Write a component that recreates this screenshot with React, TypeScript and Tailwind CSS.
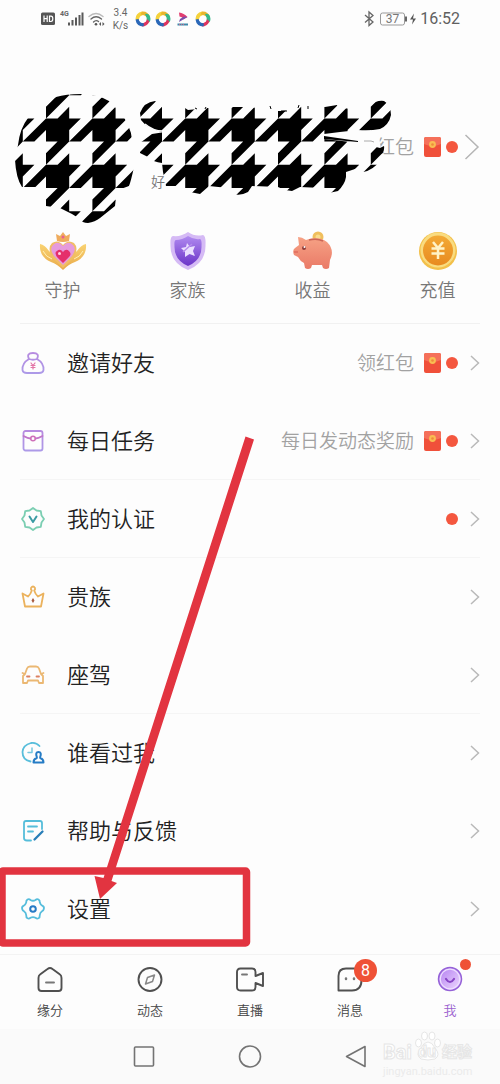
import React from 'react';

const CELL = 23.2;

function houndstoothPath() {
  const parts: string[] = [];
  for (let row = -1; row < 3; row++) {
    for (let col = -1; col < 8; col++) {
      const x = 46 + col * CELL * 2;
      const y = 118.4 + row * CELL * 2;
      const h = CELL / 2;
      const p = (a: number, b: number) => `${(x + a * h).toFixed(2)} ${(y + b * h).toFixed(2)}`;
      parts.push(
        `M${p(0, 0)}L${p(0, -1)}L${p(1, -2)}L${p(2, -2)}L${p(0, 0)}Z`,
        `M${p(0, 0)}L${p(1, 0)}L${p(2, -1)}L${p(2, 0)}L${p(3, 0)}L${p(2, 1)}L${p(2, 2)}L${p(0, 2)}Z`,
        `M${p(2, 2)}L${p(4, 0)}L${p(4, 1)}L${p(3, 2)}Z`,
      );
    }
  }
  return parts.join('');
}

function HoundstoothScribble() {
  return (
    <svg className="pointer-events-none absolute left-0 top-0 h-[200px] w-[400px]" viewBox="0 38 400 200" aria-hidden="true">
      <defs>
        <clipPath id="scribble">
          <path d="M56 97Q66 94 81 94Q100 95 109 101L119 111Q131 125 132 140L134 167Q131 181 129 186L118 190L115 206L100 218Q95 222 88 223Q82 223 80 219L72 214L60 208L46 206L46 187H22Q16 178 15 160L18 145Q20 128 28 118L46 106Q50 100 56 97Z" />
          <path d="M140 113Q144 102 155 101L163 106V109L185 108L188 110L208 108L230 109L233 107L252 107L268 111L281 111L295 110L300 105L310 108L325 107L337 105L338 107L368 112L370 106Q376 100 384 101Q391 105 391 115Q389 125 380 129Q370 131 358 130L340 132L324 134V139L360 143L380 148L384 146Q385 150 380 160Q374 170 363 172L358 168L346 172V177Q345 184 338 191L329 193L322 188L300 187L292 191L285 190L278 187L252 186L248 192Q241 196 233 194L228 188L209 186L200 194L190 192L180 186L166 186L163 172L162 163Q153 162 150 158L140 153V143L152 134L165 132Q148 130 141 120Z" />
        </clipPath>
      </defs>
      <path d="M322 136L352 128L378 128L381 150L378 160L352 160L346 142Z" fill="#fdfdfd" />
      <path d={houndstoothPath()} clipPath="url(#scribble)" />
      <path d="M145 124Q153 131 163 131" fill="none" stroke="#fdfdfd" strokeWidth="1.500" />
      <path d="M195 108L197 109M205 109L206 107M270 106L271 109M281 111H287M298 108L299 105M308 109V106" fill="none" stroke="#000" strokeWidth="1" />
      <path d="M324 136L358 141V142L324 139Z" />
      <path d="M364 141H371L374 142" fill="none" stroke="#aaa" />
    </svg>
  );
}

function Envelope() {
  return (
    <svg className="h-5 w-[17px] shrink-0" viewBox="0 0 17 20" aria-hidden="true">
      <rect width="17" height="20" rx="2" fill="#f0503a" />
      <path d="M0 2Q0 0 2 0H15Q17 0 17 2V7Q8.500 11 0 7Z" fill="#f5705a" />
      <circle cx="8.500" cy="7.500" r="3.400" fill="#f9bd52" />
      <circle cx="8.500" cy="7.500" r="1.300" fill="#ef8a3c" />
    </svg>
  );
}

function Dot() {
  return <span className="size-3 shrink-0 rounded-full bg-[#f4573f]" />;
}

function Chevron() {
  return (
    <svg className="h-[18px] w-[10px] shrink-0" viewBox="0 0 10 18" fill="none" stroke="#b9b9b9" strokeWidth="1.500" aria-hidden="true">
      <path d="M1 2L8.500 9L1 16" />
    </svg>
  );
}

function StatusIcons() {
  return (
    <svg className="h-[18px] w-[64px]" viewBox="0 0 64 18" aria-hidden="true">
      <rect x="0" y="2.500" width="14" height="12.500" rx="1.500" fill="#555" />
      <path d="M3 5.500V12M3 8.700H6.200M6.200 5.500V12M8.500 6.100V11.500H10Q11.800 11.500 11.800 8.800T10 6.100Z" stroke="#fff" strokeWidth="1.200" fill="none" />
      <g stroke="#5a5a5a" strokeWidth="2">
        <path d="M28 15.500V12.500M31.500 15.500V10M35 15.500V7.500M38.500 15.500V5M41.500 15.500V2.500" />
      </g>
      <g fill="none" stroke="#666" strokeWidth="1.400" strokeLinecap="round">
        <path d="M48 6.500Q55 0.500 62 6.500" stroke="#bbb" />
        <path d="M50 9Q55 4.500 60.500 9M52.500 12Q55 9.500 57.500 11.500" />
      </g>
      <circle cx="55" cy="14.300" r="1.300" fill="#555" />
      <path d="M58 14L60 12V16ZM63.500 14L61.500 12V16Z" fill="#555" />
    </svg>
  );
}

function Swirl() {
  return (
    <svg className="size-4" viewBox="0 0 16 16" aria-hidden="true">
      <path d="M0.500 8Q0.500 2 7 0.500L9 4Q5 4 3.500 10Q1 10 0.500 8Z" fill="#f5d23c" />
      <path d="M7 0.500Q13 0 15 6L12.500 8Q11 4 5.500 3.500Z" fill="#e8b62e" />
      <path d="M10 3Q15 2 15.500 8Q15.500 10 14 11.500L10.500 9.500Q12.500 7 10 3Z" fill="#34b98a" />
      <path d="M14.500 10.500Q12 15.500 7 15.500L5.500 12Q10 13 12 8Z" fill="#dd3560" />
      <path d="M8.500 15.500Q1.500 15.500 0.500 8.500L3.500 8Q4.500 12 9 12.500Z" fill="#2b68b8" />
      <circle cx="8" cy="8" r="3.600" fill="#fff" />
    </svg>
  );
}

function StatusBar() {
  return (
    <div className="flex h-[38px] items-center justify-between pl-[41px] pr-10 text-[#666]">
      <div className="flex items-center">
        <div className="relative">
          <StatusIcons />
          <span className="absolute left-[19px] top-0 text-[7px] leading-[8px] font-bold">4G</span>
        </div>
        <div className="ml-[7px] w-[17px] text-center text-[10px] leading-[13px]">
          <div>3.4</div>
          <div>K/s</div>
        </div>
        <div className="ml-[6px] flex items-center gap-1">
          <Swirl />
          <Swirl />
          <svg className="size-4" viewBox="0 0 16 16" aria-hidden="true">
            <path d="M4 1.500Q9 2 12.500 6L8 8.500Q8 6 4.500 5.500Z" fill="#e23d70" />
            <path d="M12.500 6L4 11L5 8L9 5.500Z" fill="#7650ad" />
            <path d="M2.500 13.500H13" stroke="#3f89aa" strokeWidth="2" />
            <path d="M4 13.500H9" stroke="#d06a8c" strokeWidth="1" strokeDasharray="1 1" />
          </svg>
          <Swirl />
        </div>
      </div>
      <div className="flex items-center">
        <svg className="h-[18px] w-[54px]" viewBox="0 0 54 18" fill="none" stroke="#666" aria-hidden="true">
          <path d="M1 5L9 12L5 15.500V2L9 5.500L1 12.500" strokeWidth="1.300" />
          <rect x="16.500" y="3" width="24" height="12" rx="2" stroke="#999" />
          <path d="M42 6.500V11.500" strokeWidth="2" />
          <path d="M50 3.500L46 9.500H49L48 14.500L52 8.500H49Z" fill="#555" stroke="none" />
          <text x="28.500" y="13" textAnchor="middle" fontSize="12" fill="#777" stroke="none">37</text>
        </svg>
        <span className="ml-[2px] text-base leading-5 text-[#606060]">16:52</span>
      </div>
    </div>
  );
}

const shortcuts = [
  {
    label: '守护',
    icon: (
      <>
        <path d="M1 13Q6 14 10 20L24 32L38 20Q42 14 47 13Q48 26 36 31Q30 33 24 39Q18 33 12 31Q0 26 1 13Z" fill="url(#gold)" />
        <path d="M4 20Q7 26 13 28M44 20Q41 26 35 28" stroke="#fff0b5" fill="none" />
        <path d="M24 37L13 26Q8 17 13 12Q19 8 24 14Q29 8 35 12Q40 17 35 26Z" fill="#f1bd65" />
        <path d="M24 34L15 25Q10 18 14 14Q19 9 24 15Q29 9 34 14Q38 18 33 25Z" fill="#e69bdd" />
        <path d="M24 32L18 26Q15 21 18 20Q21 17 24 21Q27 17 30 20Q33 23 30 26Z" fill="#e52f6b" />
        <path d="M18 10L17 3L21 5L24 1L27 5L31 3L30 10Q24 12 18 10Z" fill="#efac5e" />
        <circle cx="24" cy="6" r="1.500" fill="#e96091" />
        <circle cx="20.500" cy="22.500" r="1.500" fill="#ffd2df" />
      </>
    ),
  },
  {
    label: '家族',
    icon: (
      <>
        <path d="M24 1Q31 6 39 4Q42 5 41.500 14Q42 32 24 39Q6 32 6.500 14Q6 5 9 5Q17 6 24 1Z" fill="#d5baf5" />
        <path d="M24 5Q30 9 36 8Q38 9 37.500 15Q38 29 24 35Q10 29 10.500 15Q10 9 12 9Q18 9 24 5Z" fill="url(#violet)" />
        <path d="M23 12L26 16L31 15L29 20L31 25L25.500 23L21 26L21 21L17 17L22 16Z" fill="#eadfff" />
        <path d="M19 21L28 13" stroke="#b58ced" strokeWidth="1.500" />
      </>
    ),
  },
  {
    label: '收益',
    icon: (
      <>
        <circle cx="29" cy="6" r="5.500" fill="#f0bf5d" />
        <circle cx="29" cy="6" r="2.500" fill="#f9dc8c" />
        <path d="M9 6Q13 6 17 9Q29 4 38 11Q46 19 41 29L40 37Q37 39 34 37L33 34H23L22 37Q19 39 16 37L15 32Q11 30 9 26L5 24Q3 19 6 17L10 14Z" fill="url(#pig)" />
        <path d="M20 9Q28 7 34 10" stroke="#cb6655" strokeWidth="1.500" fill="none" />
        <circle cx="15" cy="17" r="2" fill="#8d3e3b" />
        <circle cx="15.500" cy="16" r="1" fill="#fff" />
        <path d="M6 20V22M8 20V22" stroke="#d85a50" />
      </>
    ),
  },
  {
    label: '充值',
    icon: (
      <>
        <circle cx="24" cy="20" r="19" fill="#f3c04a" />
        <circle cx="24" cy="19" r="17.500" fill="#f9dc80" />
        <circle cx="24" cy="19.500" r="15" fill="url(#coin)" />
        <path d="M19 11L24 17L29 11M17.500 17.500H30.500M17.500 22.500H30.500M24 17V28" stroke="#fff3c7" strokeWidth="2.500" fill="none" />
      </>
    ),
  },
];

function GradientDefs() {
  return (
    <svg className="absolute size-0" aria-hidden="true">
      <defs>
        <linearGradient id="gold" x2="0" y2="1"><stop stopColor="#f9d372" /><stop offset="1" stopColor="#e9a94a" /></linearGradient>
        <linearGradient id="violet" x2="0" y2="1"><stop stopColor="#b08af0" /><stop offset="1" stopColor="#6b34c8" /></linearGradient>
        <linearGradient id="pig" x2="0" y2="1"><stop stopColor="#f6a285" /><stop offset="1" stopColor="#ea7a67" /></linearGradient>
        <linearGradient id="coin" x2="0" y2="1"><stop stopColor="#f3aa35" /><stop offset="1" stopColor="#e88a20" /></linearGradient>
        <linearGradient id="face" x2="1" y2="1"><stop stopColor="#b27df0" /><stop offset="1" stopColor="#f0dcff" /></linearGradient>
        <linearGradient id="lilac" x2="0" y2="1"><stop stopColor="#b68be0" /><stop offset="1" stopColor="#ad9ae8" /></linearGradient>
      </defs>
    </svg>
  );
}

type Row = { label: string; icon: React.ReactNode; hint?: string; dot?: boolean; divider?: boolean };

const rows: Row[] = [
  {
    label: '邀请好友',
    hint: '领红包',
    dot: true,
    icon: (
      <>
        <path d="M9 9Q6 3 13 3T17 9Q24 13 23.500 20Q23 23 19 23H7Q3 23 2.500 20Q2 13 9 9ZM9 9Q13 10.500 17 9" stroke="url(#lilac)" />
        <path d="M11 13L13 15.500L15 13M11 15.500H15M11 17.500H15M13 15.500V19" stroke="#e276a6" strokeWidth="1.200" />
      </>
    ),
  },
  {
    label: '每日任务',
    hint: '每日发动态奖励',
    dot: true,
    divider: true,
    icon: (
      <>
        <rect x="3.500" y="3" width="19" height="19.500" rx="2" stroke="url(#lilac)" />
        <path d="M3.500 8Q8 10.500 10.500 10.500M15.500 10.500Q18 10.500 22.500 8" stroke="#c176c9" />
        <circle cx="13" cy="10.500" r="2.300" stroke="#cf70b9" strokeWidth="1.500" />
      </>
    ),
  },
  {
    label: '我的认证',
    dot: true,
    divider: true,
    icon: (
      <>
        <path d="M13 2L16.500 4.500L20.800 5.200L21.500 9.500L24 13L21.500 16.500L20.800 20.800L16.500 21.500L13 24L9.500 21.500L5.200 20.800L4.500 16.500L2 13L4.500 9.500L5.200 5.200L9.500 4.500Z" stroke="#7bceb2" />
        <path d="M9.500 10.500L13 16L16.500 10.500" stroke="#3b9ba3" strokeWidth="2" />
      </>
    ),
  },
  {
    label: '贵族',
    icon: (
      <>
        <path d="M5 22.500L2.500 9.500L8 12.500Q10.500 10.500 11.800 6.500Q10.500 5.500 11 4Q12 2.500 13 2.500T15 4Q15.500 5.500 14.200 6.500Q15.500 10.500 18 12.500L23.500 9.500L21 22.500Z" stroke="#ebb25d" />
        <path d="M13 14L14.500 16.500L13 19L11.500 16.500Z" fill="#a85c42" stroke="none" />
      </>
    ),
  },
  {
    label: '座驾',
    divider: true,
    icon: (
      <>
        <path d="M5 12L7 6.500Q7.800 4.500 10 4.500H16Q18.200 4.500 19 6.500L21 12L23 14V21H19L18 18.500H8L7 21H3V14ZM2.500 11L5 12M21 12L23.500 11" stroke="#ebb873" />
        <path d="M7 14.500H9.500M16.500 14.500H19" stroke="#dc8061" />
      </>
    ),
  },
  {
    label: '谁看过我',
    icon: (
      <>
        <path d="M19.500 6Q16 2 11 3Q3 5 2.500 12Q2.500 20 10.500 21.500" stroke="#58bedb" />
        <path d="M12 8V12.500H8" stroke="#76c7df" strokeWidth="1.500" />
        <path d="M16.800 17Q15 12 18.500 12T20.200 17V18Q23.500 19 23.500 22.500H13.500Q13.500 19 16.800 18Z" stroke="#267cc5" strokeWidth="2" />
      </>
    ),
  },
  {
    label: '帮助与反馈',
    icon: (
      <>
        <path d="M22 11V5Q22 3 20 3H6Q4 3 4 5V20Q4 22.500 7 22.500H11M8 8.500H17M8 13.500H13" stroke="#55bdda" />
        <path d="M14.500 21.500L22.500 13.500" stroke="#287eb8" strokeWidth="2.300" />
      </>
    ),
  },
  {
    label: '设置',
    icon: (
      <>
        <path d="M7.500 3.500Q9 2.500 10.500 4Q13 5.500 15.500 4Q17 2.500 18.500 3.500Q20 4.500 19.800 6.500Q20.500 9 22.500 9.800Q24.500 11 23.800 13Q23.500 14.500 22 15.200Q20 16.500 19.800 19Q20 21.500 18.500 22.300Q17 23 15.500 21.800Q13 20.500 10.500 21.800Q9 23 7.500 22.300Q6 21.500 6.200 19Q6 16.500 4 15.200Q2.500 14.500 2.200 13Q1.500 11 3.500 9.800Q5.500 9 6.200 6.500Q6 4.500 7.500 3.500Z" stroke="#55bddc" />
        <circle cx="13" cy="13" r="2.800" stroke="#267ac5" strokeWidth="2" />
      </>
    ),
  },
];

function MenuRow({ row }: { row: Row }) {
  return (
    <li className={row.divider ? 'border-b border-[#f5f5f5]' : 'border-b border-transparent'}>
      <button type="button" className="flex h-[77px] w-full items-center text-left">
        <svg className="mr-[21px] size-[26px] shrink-0" viewBox="0 0 26 26" fill="none" strokeWidth="1.800" strokeLinejoin="round" strokeLinecap="round" aria-hidden="true">
          {row.icon}
        </svg>
        <span className="flex-1 pt-[2px] text-[22px] leading-8 font-[350] text-[#222]">{row.label}</span>
        {row.hint && (
          <>
            <span className="mr-[10px] pt-[2px] text-[19px] leading-7 font-[350] text-[#a2a2a2]">{row.hint}</span>
            <Envelope />
          </>
        )}
        {row.dot && <span className="ml-[5px] flex"><Dot /></span>}
        <span className="ml-3"><Chevron /></span>
      </button>
    </li>
  );
}

const tabs = [
  {
    label: '缘分',
    icon: (
      <>
        <path d="M11.500 4Q14 2 16.500 4L24 9.500Q25.500 10.500 25.500 13V23Q25.500 26 22.500 26H5.500Q2.500 26 2.500 23V13Q2.500 10.500 4 9.500Z" />
        <path d="M10 17.500H18" stroke="#777" />
      </>
    ),
  },
  {
    label: '动态',
    icon: (
      <>
        <circle cx="14" cy="14.500" r="11.500" />
        <path d="M9.500 19L11.500 12.500L18.500 10L16.500 16.500Z" stroke="#888" strokeWidth="1.500" />
      </>
    ),
  },
  {
    label: '直播',
    icon: (
      <>
        <path d="M4.500 3.500H16Q19.500 3.500 19.500 7V11L27 8V21L19.500 18V22Q19.500 25.500 16 25.500H4.500Q1 25.500 1 22V7Q1 3.500 4.500 3.500Z" />
        <path d="M6 9.500H11" stroke="#777" />
      </>
    ),
  },
  {
    label: '消息',
    badge: true,
    icon: (
      <>
        <path d="M2.500 25.500V11Q2.500 3.500 10 3.500H18Q25.500 3.500 25.500 11V15Q25.500 25.500 16 25.500Z" />
        <path d="M10 13.500V14M18 13.500V14" stroke="#777" strokeWidth="2.500" />
      </>
    ),
  },
  {
    label: '我',
    active: true,
    icon: (
      <>
        <circle cx="14" cy="14" r="11.500" fill="url(#face)" stroke="#9562d7" strokeWidth="1.500" />
        <circle cx="14" cy="14" r="9.800" stroke="#eee0ff" strokeWidth="1.200" />
        <path d="M10 14Q14 20 18 14" stroke="#8744c5" strokeWidth="2.200" />
      </>
    ),
  },
];

function TabBar() {
  return (
    <nav className="mt-[6px] grid h-[75px] grid-cols-5 border-t border-[#f3f3f3]">
      {tabs.map((t) => (
        <button key={t.label} type="button" className="flex flex-col items-center pt-[10px]">
          <span className="relative">
            <svg className="size-7" viewBox="0 0 28 28" fill="none" stroke="#505050" strokeWidth="1.900" strokeLinejoin="round" strokeLinecap="round" aria-hidden="true">
              {t.icon}
            </svg>
            {t.badge && (
              <span className="absolute -top-[6px] left-[18px] flex size-[23px] items-center justify-center rounded-full bg-[#ef5136] text-base leading-5 text-white">8</span>
            )}
            {t.active && <span className="absolute -top-[6px] left-6 size-[11px] rounded-full bg-[#ef5136]" />}
          </span>
          <span className={t.active ? 'mt-2 text-[13px] leading-5 font-[350] text-[#9b62cf]' : 'mt-2 text-[13px] leading-5 font-[350] text-[#444]'}>{t.label}</span>
        </button>
      ))}
    </nav>
  );
}

function Watermark() {
  return (
    <div className="pointer-events-none absolute right-7 top-0 w-[89px] text-[#ebebeb]">
      <div className="flex items-center justify-between pt-[9px] leading-6">
        <span className="text-xl font-bold text-white [-webkit-text-stroke:1px_#e6e6e6]">Bai</span>
        <span className="relative text-base font-bold text-white [-webkit-text-stroke:1px_#e6e6e6]">
          <svg className="absolute -left-[3px] -top-[9px] h-[31px] w-[26px]" viewBox="0 0 26 31" fill="#fff" stroke="#e6e6e6" aria-hidden="true">
            <ellipse cx="9.500" cy="5" rx="3" ry="4" />
            <ellipse cx="17" cy="5" rx="3" ry="4" />
            <ellipse cx="3.500" cy="12" rx="3" ry="4" />
            <ellipse cx="22.500" cy="12" rx="3" ry="4" />
            <path d="M13 11Q17 11 20 17Q26 24 20 28Q13 30 6 28Q0 24 6 17Q9 11 13 11Z" />
          </svg>
          <span className="relative">du</span>
        </span>
        <span className="text-[15px] font-bold text-white [-webkit-text-stroke:1px_#e6e6e6]">经验</span>
      </div>
      <div className="text-center text-[11px] leading-3">jingyan.baidu.com</div>
    </div>
  );
}

function SystemNav() {
  return (
    <div className="relative h-[55px] bg-[#fafafa]">
      <div className="flex h-full items-center justify-center gap-[82px]">
        {[
          { name: '最近任务', d: <rect x="2.500" y="2" width="19" height="19" rx="1" /> },
          { name: '主屏幕', d: <circle cx="12" cy="11.500" r="10.500" /> },
          { name: '返回', d: <path d="M21 1.500V21.500L2.500 11.500Z" /> },
        ].map((b) => (
          <button key={b.name} type="button" aria-label={b.name}>
            <svg className="size-6" viewBox="0 0 24 24" fill="none" stroke="#737373" strokeWidth="1.600" strokeLinejoin="round" aria-hidden="true">
              {b.d}
            </svg>
          </button>
        ))}
      </div>
      <Watermark />
    </div>
  );
}

export default function App() {
  return (
    <div className="w-full overflow-x-hidden bg-[#fdfdfd] font-['Roboto','Noto_Sans_CJK_SC',sans-serif]">
      <GradientDefs />
      <StatusBar />
      <header className="relative h-[193px] px-5 pt-[92px]">
        <div className="flex h-[34px] items-center justify-end">
          <span className="mr-[10px] pt-[2px] text-[19px] leading-7 font-[350] text-[#a2a2a2]">领红包</span>
          <Envelope />
          <span className="ml-[5px] flex"><Dot /></span>
          <svg className="ml-[6px] h-7 w-4 shrink-0" viewBox="0 0 16 28" fill="none" stroke="#b5b5b5" strokeWidth="1.500" aria-hidden="true">
            <path d="M1.500 2L14 14L1.500 26" />
          </svg>
        </div>
        <p className="ml-[131px] mt-2 text-sm leading-5 font-[350] text-[#777]">好</p>
        <HoundstoothScribble />
      </header>
      <section className="grid h-[92px] grid-cols-4">
        {shortcuts.map((s) => (
          <button key={s.label} type="button" className="flex flex-col items-center">
            <svg className="h-10 w-12" viewBox="0 0 48 40" aria-hidden="true">{s.icon}</svg>
            <span className="mt-[7px] text-[18px] leading-[26px] font-[350] text-[#777]">{s.label}</span>
          </button>
        ))}
      </section>
      <main className="relative">
        <ul className="mx-5 border-t border-[#f1f1f1]">
          {rows.map((r) => <MenuRow key={r.label} row={r} />)}
        </ul>
        <svg className="pointer-events-none absolute left-0 top-0 h-[632px] w-[260px]" viewBox="0 323 260 632" aria-hidden="true">
          <rect x="2" y="871" width="244.500" height="72" rx="1" fill="none" stroke="#e23440" strokeWidth="7.500" />
          <path d="M245.500 436.500L254 439.500L111.500 881L117 883L100 899L94.500 876L103.500 878Z" fill="#e23440" />
        </svg>
      </main>
      <TabBar />
      <SystemNav />
    </div>
  );
}
